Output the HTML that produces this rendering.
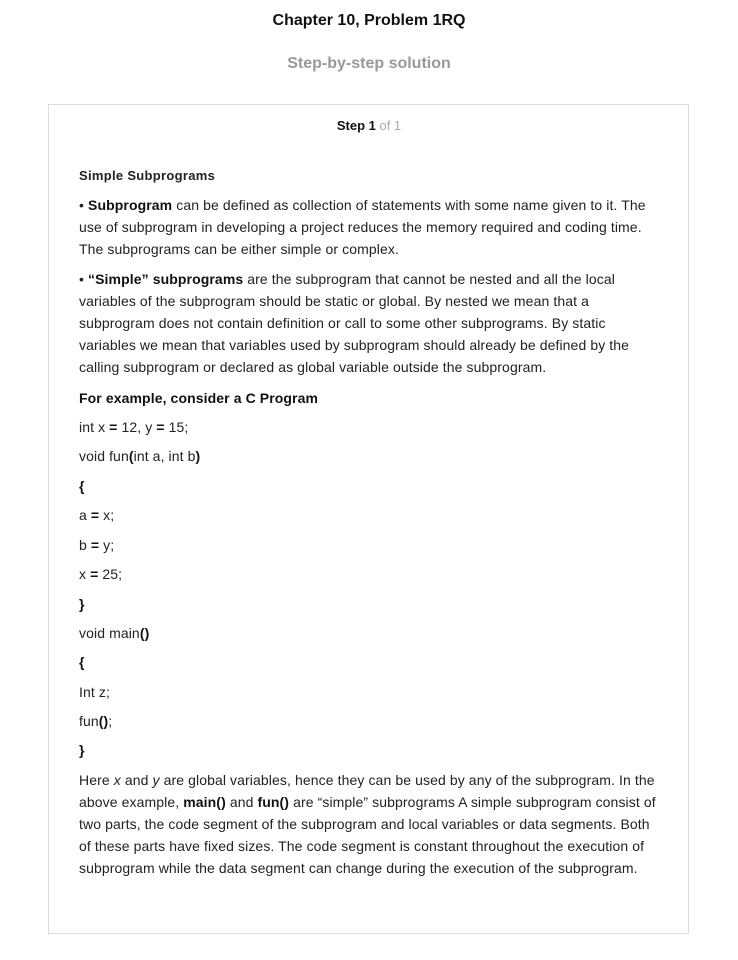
<!DOCTYPE html>
<html><head><meta charset="utf-8"><style>
body{margin:0;width:738px;height:960px;background:#fff;font-family:"Liberation Sans",Arial,sans-serif;color:#222;position:relative;overflow:hidden}
.a{position:absolute;white-space:nowrap}
.t{left:0;width:738px;text-align:center;font-weight:bold}
.box{position:absolute;left:48px;top:104px;width:639px;height:828px;border:1px solid #ddd}
.p{left:79px;font-size:14px;line-height:22px;letter-spacing:0.1px}
b{font-weight:bold;color:#111}
</style></head><body>
<div class="a t" style="top:10px;font-size:16px;line-height:22px;color:#111">Chapter 10, Problem 1RQ</div>
<div class="a t" style="top:53px;font-size:16px;line-height:22px;color:#999">Step-by-step solution</div>
<div class="box"></div>
<div class="a t" style="top:117px;font-size:13px;line-height:18px;color:#111">Step 1 <span style="font-weight:normal;color:#aaa">of 1</span></div>
<div class="a p" style="top:165px;font-weight:bold;font-size:13px;letter-spacing:0.3px">Simple Subprograms</div>
<div class="a p" style="top:194px">• <b>Subprogram</b> can be defined as collection of statements with some name given to it. The<br>use of subprogram in developing a project reduces the memory required and coding time.<br>The subprograms can be either simple or complex.</div>
<div class="a p" style="top:268px">• <b>“Simple” subprograms</b> are the subprogram that cannot be nested and all the local<br>variables of the subprogram should be static or global. By nested we mean that a<br>subprogram does not contain definition or call to some other subprograms. By static<br>variables we mean that variables used by subprogram should already be defined by the<br>calling subprogram or declared as global variable outside the subprogram.</div>
<div class="a p" style="top:387px"><b>For example, consider a C Program</b></div>
<div class="a p" style="top:416px">int x <b>=</b> 12, y <b>=</b> 15;</div>
<div class="a p" style="top:445px">void fun<b>(</b>int a, int b<b>)</b></div>
<div class="a p" style="top:475px"><b>{</b></div>
<div class="a p" style="top:504px">a <b>=</b> x;</div>
<div class="a p" style="top:534px">b <b>=</b> y;</div>
<div class="a p" style="top:563px">x <b>=</b> 25;</div>
<div class="a p" style="top:593px"><b>}</b></div>
<div class="a p" style="top:622px">void main<b>()</b></div>
<div class="a p" style="top:651px"><b>{</b></div>
<div class="a p" style="top:681px">Int z;</div>
<div class="a p" style="top:710px">fun<b>()</b>;</div>
<div class="a p" style="top:739px"><b>}</b></div>
<div class="a p" style="top:769px">Here <i>x</i> and <i>y</i> are global variables, hence they can be used by any of the subprogram. In the<br>above example, <b>main()</b> and <b>fun()</b> are “simple” subprograms A simple subprogram consist of<br>two parts, the code segment of the subprogram and local variables or data segments. Both<br>of these parts have fixed sizes. The code segment is constant throughout the execution of<br>subprogram while the data segment can change during the execution of the subprogram.</div>
</body></html>
